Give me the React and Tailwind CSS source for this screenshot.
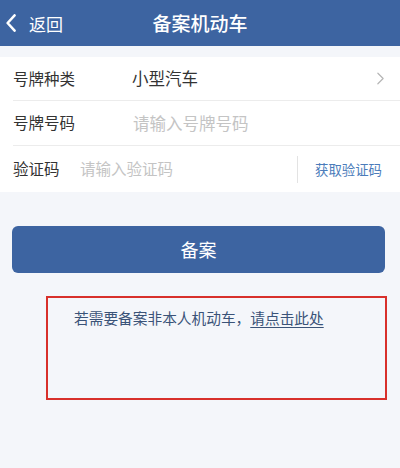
import React from "react";

const font = { fontFamily: '"Noto Sans CJK SC", "Noto Sans", sans-serif' };

export default function App() {
  return (
    <div className="w-[400px] h-[468px] bg-[#f4f6fa] flex flex-col" style={font}>
      <div className="h-[46px] bg-[#3d64a1] flex items-center relative shrink-0">
        <div className="flex items-center pl-[6px] text-white">
          <svg viewBox="0 0 10 18" className="w-[10px] h-[18px]" fill="none">
            <path d="M8.6 1.3 L1.6 9 L8.6 16.7" stroke="#ffffff" strokeWidth="2.5" strokeLinecap="round" strokeLinejoin="round" />
          </svg>
          <span className="ml-[13px] text-[17px] leading-none">返回</span>
        </div>
        <div className="absolute inset-0 flex items-center justify-center text-white text-[19px] font-medium pointer-events-none">
          备案机动车
        </div>
      </div>

      <div className="mt-[11px] bg-white flex flex-col">
        <div className="h-[44px] flex items-center ml-[13px] border-b border-[#ececec]">
          <span className="w-[119px] text-[15.5px] text-[#333]">号牌种类</span>
          <span className="flex-1 text-[16.5px] text-[#333]">小型汽车</span>
          <svg viewBox="0 0 8 14" className="w-[7px] h-[13px] mr-[16px]" fill="none">
            <path d="M1 1 L7 7 L1 13" stroke="#b5b5b5" strokeWidth="1.4" strokeLinecap="round" strokeLinejoin="round" />
          </svg>
        </div>
        <div className="h-[45px] flex items-center ml-[13px] border-b border-[#ececec]">
          <span className="w-[120px] text-[15.5px] text-[#333]">号牌号码</span>
          <span className="flex-1 text-[16.5px] text-[#c4c4c4]">请输入号牌号码</span>
        </div>
        <div className="h-[46px] flex items-center ml-[13px]">
          <span className="w-[67px] text-[15.5px] text-[#333]">验证码</span>
          <span className="flex-1 text-[15.5px] text-[#c4c4c4]">请输入验证码</span>
          <div className="w-px h-[27px] bg-[#e3e3e3]"></div>
          <span className="w-[102px] pl-[17px] text-[13.4px] text-[#4b7cba]">获取验证码</span>
        </div>
      </div>

      <div className="mt-[34px] ml-[12px] mr-[15px] h-[47px] rounded-[6px] bg-[#3d64a1] flex items-center justify-center text-white text-[18px]">
        备案
      </div>

      <div className="mt-[23px] ml-[46px] w-[341px] h-[104px] border-2 border-[#d8302b] pl-[26px] pt-[7px]">
        <span className="text-[14.7px] text-[#3a5378]">
          若需要备案非本人机动车，<span className="underline underline-offset-[3px]">请点击此处</span>
        </span>
      </div>
    </div>
  );
}
